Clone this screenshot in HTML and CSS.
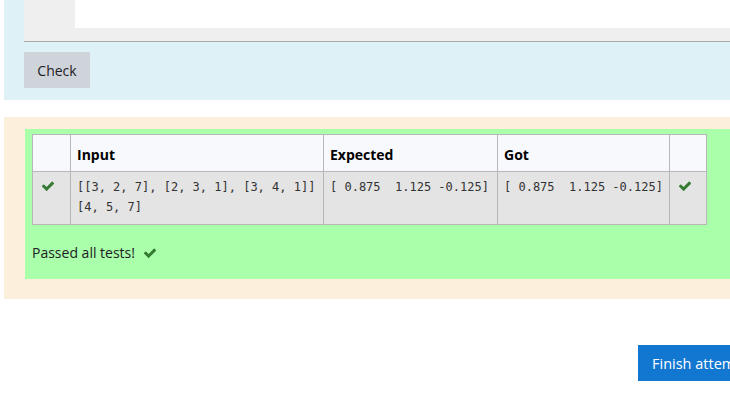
FILE: index.html
```html
<!DOCTYPE html>
<html>
<head>
<meta charset="utf-8">
<link rel="stylesheet" href="styles.css">
</head>
<body>
<div class="page">
  <div class="formulation">
    <div class="editor">
      <div class="editor-text"></div>
    </div>
    <button class="btn-check">Check</button>
  </div>
  <div class="outcome">
    <div class="feedback">
      <table class="results">
        <thead>
          <tr>
            <th class="c-icon"></th>
            <th class="c-input">Input</th>
            <th class="c-exp">Expected</th>
            <th class="c-got">Got</th>
            <th class="c-icon2"></th>
          </tr>
        </thead>
        <tbody>
          <tr>
            <td class="icon-cell"><svg class="tick" viewBox="0 0 1792 1792"><path d="M1671 566q0 40-28 68l-724 724-136 136q-28 28-68 28t-68-28l-136-136-362-362q-28-28-28-68t28-68l136-136q28-28 68-28t68 28l294 295 656-657q28-28 68-28t68 28l136 136q28 28 28 68z"/></svg></td>
            <td class="mono">[[3, 2, 7], [2, 3, 1], [3, 4, 1]]<br>[4, 5, 7]</td>
            <td class="mono">[ 0.875&nbsp; 1.125 -0.125]</td>
            <td class="mono">[ 0.875&nbsp; 1.125 -0.125]</td>
            <td class="icon-cell"><svg class="tick" viewBox="0 0 1792 1792"><path d="M1671 566q0 40-28 68l-724 724-136 136q-28 28-68 28t-68-28l-136-136-362-362q-28-28-28-68t28-68l136-136q28-28 68-28t68 28l294 295 656-657q28-28 68-28t68 28l136 136q28 28 28 68z"/></svg></td>
          </tr>
        </tbody>
      </table>
      <div class="passed">Passed all tests! <svg class="tick tick-inline" viewBox="0 0 1792 1792"><path d="M1671 566q0 40-28 68l-724 724-136 136q-28 28-68 28t-68-28l-136-136-362-362q-28-28-28-68t28-68l136-136q28-28 68-28t68 28l294 295 656-657q28-28 68-28t68 28l136 136q28 28 28 68z"/></svg></div>
    </div>
  </div>
  <div class="actions">
    <button class="btn-finish">Finish attempt ...</button>
  </div>
</div>
</body>
</html>
```
FILE: styles.css
```css
html, body {
  margin: 0;
  padding: 0;
  background: #ffffff;
  overflow: hidden;
}
body {
  font-family: "Open Sans", "Noto Sans", sans-serif;
  font-size: 14px;
  color: #1d2125;
}
.page {
  width: 820px;
  padding-left: 4px;
}
.formulation {
  background: #def1f7;
  padding: 0 0 12px 20px;
}
.editor {
  background: #efefef;
  height: 41px;
  border-bottom: 1px solid #a9a9a9;
  padding-left: 51px;
}
.editor-text {
  background: #ffffff;
  height: 28px;
}
.btn-check {
  display: block;
  margin-top: 10px;
  width: 66px;
  height: 36px;
  border: none;
  background: #ced4da;
  color: #1d2125;
  font-family: inherit;
  font-size: 14px;
  padding: 0;
}
.outcome {
  margin-top: 17px;
  background: #fcefdc;
  padding: 12px 0 20px 21px;
}
.feedback {
  background: #aaffaa;
  padding: 5px 7px 16px 7px;
}
.results {
  border-collapse: collapse;
  width: 675px;
}
.results th, .results td {
  border: 1px solid #b7b7b7;
  text-align: left;
  vertical-align: top;
  line-height: 20px;
}
.results th {
  background: #f8f9fc;
  font-weight: bold;
  font-size: 14px;
  padding: 10px 6px 6px 6px;
  color: #000;
}
.results td {
  background: #e4e4e4;
  padding: 5px 6px 7px 6px;
  height: 40px;
}
.c-icon { width: 25px; }
.c-input { width: 240px; }
.c-exp { width: 161px; }
.c-got { width: 159px; }
.c-icon2 { width: 24px; }
.mono {
  font-family: "DejaVu Sans Mono", "Liberation Mono", monospace;
  font-size: 12px;
  color: #333333;
  white-space: nowrap;
}
.icon-cell {
  text-align: center;
}
.results td.icon-cell {
  padding-left: 8px;
}
.tick {
  width: 14px;
  height: 14px;
  fill: #357a32;
  display: inline-block;
  vertical-align: -1px;
}
.passed {
  margin-top: 18px;
  line-height: 20px;
  color: #1d2125;
}
.tick-inline {
  margin-left: 4px;
  vertical-align: -2px;
}
.actions {
  padding: 46px 0 0 634px;
}
.btn-finish {
  height: 36px;
  background: #1177d1;
  color: #ffffff;
  border: none;
  font-family: inherit;
  font-size: 14.5px;
  padding: 0 14px;
  white-space: nowrap;
}
```
